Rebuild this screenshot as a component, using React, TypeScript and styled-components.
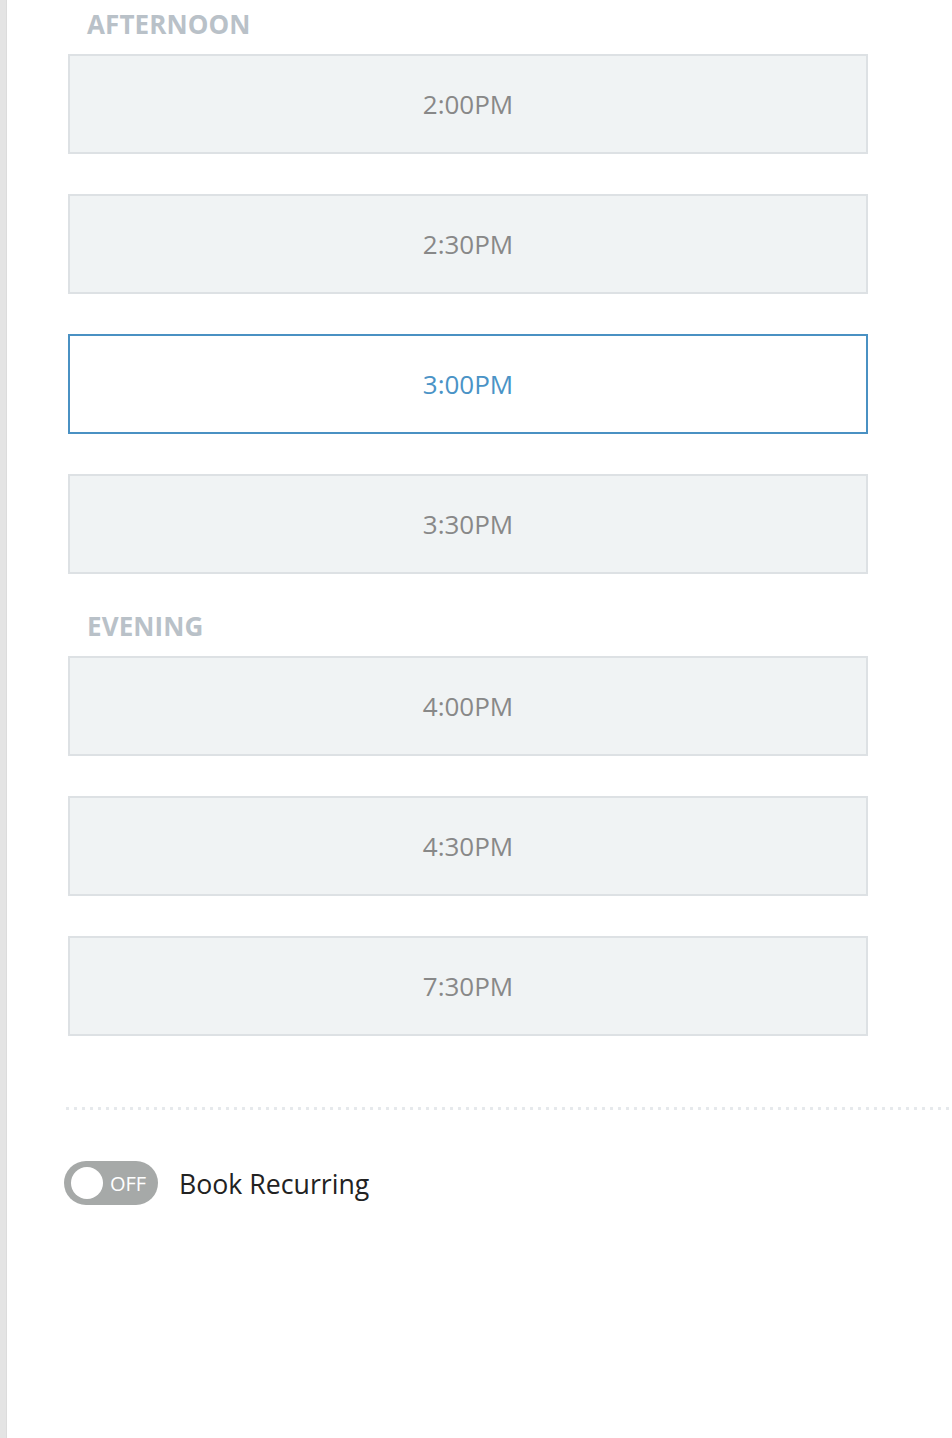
import React, { useState } from "react";
import styled, { createGlobalStyle } from "styled-components";

const GlobalStyle = createGlobalStyle`
  html, body { margin: 0; padding: 0; background: #ffffff; }
  body { font-family: "Open Sans", "Noto Sans", Arial, sans-serif; }
  * { box-sizing: border-box; }
`;

const Page = styled.div`
  min-height: 1438px;
  border-left: 6px solid #e4e4e4;
  box-shadow: inset 1px 0 0 #dcdcdc;
  display: flex;
  flex-direction: column;
  padding-top: 7px;
`;

const Slots = styled.div`
  display: flex;
  flex-direction: column;
  padding-left: 62px;
  width: 862px;
`;

const Section = styled.section<{ $first?: boolean }>`
  display: flex;
  flex-direction: column;
  margin-top: ${(p) => (p.$first ? "0" : "35px")};
`;

const Heading = styled.h2`
  margin: 0 0 12px 19px;
  font-size: 26px;
  line-height: 35px;
  font-weight: 700;
  color: #b9c1c8;
  letter-spacing: 0.1px;
`;

const SlotList = styled.div`
  display: flex;
  flex-direction: column;
  gap: 40px;
`;

const Slot = styled.button<{ $selected?: boolean }>`
  height: 100px;
  width: 800px;
  display: flex;
  align-items: center;
  justify-content: center;
  border: 2px solid ${(p) => (p.$selected ? "#4a91c3" : "#dde1e4")};
  background: ${(p) => (p.$selected ? "#ffffff" : "#f0f3f4")};
  color: ${(p) => (p.$selected ? "#4a93c6" : "#888888")};
  font-family: "Open Sans", "Noto Sans", Arial, sans-serif;
  font-size: 26px;
  font-weight: 400;
  padding: 0;
  cursor: pointer;
`;

const Divider = styled.hr`
  margin: 71px 0 0 60px;
  border: none;
  height: 3px;
  background-image: linear-gradient(to right, #e6e9ec 0 3px, transparent 3px 8px);
  background-size: 8px 3px;
  background-repeat: repeat-x;
`;

const RecurringRow = styled.div`
  display: flex;
  align-items: center;
  gap: 21px;
  margin: 51px 0 0 58px;
`;

const Toggle = styled.button`
  position: relative;
  width: 94px;
  height: 44px;
  border-radius: 22px;
  border: none;
  background: #a6a9a8;
  padding: 0 0 0 34px;
  display: flex;
  align-items: center;
  justify-content: center;
  color: #ffffff;
  font-family: "Open Sans", "Noto Sans", Arial, sans-serif;
  font-size: 20px;
  cursor: pointer;
`;

const Knob = styled.span`
  position: absolute;
  left: 7px;
  top: 6px;
  width: 32px;
  height: 32px;
  border-radius: 50%;
  background: #ffffff;
`;

const Label = styled.span`
  font-size: 26.7px;
  color: #222222;
`;

const sections = [
  { title: "AFTERNOON", times: ["2:00PM", "2:30PM", "3:00PM", "3:30PM"] },
  { title: "EVENING", times: ["4:00PM", "4:30PM", "7:30PM"] },
];

export default function App() {
  const [selected, setSelected] = useState("3:00PM");
  return (
    <>
      <GlobalStyle />
      <Page>
        <Slots>
          {sections.map((s, i) => (
            <Section key={s.title} $first={i === 0}>
              <Heading>{s.title}</Heading>
              <SlotList>
                {s.times.map((t) => (
                  <Slot key={t} $selected={t === selected} onClick={() => setSelected(t)}>
                    {t}
                  </Slot>
                ))}
              </SlotList>
            </Section>
          ))}
        </Slots>
        <Divider />
        <RecurringRow>
          <Toggle>
            <Knob />
            OFF
          </Toggle>
          <Label>Book Recurring</Label>
        </RecurringRow>
      </Page>
    </>
  );
}
